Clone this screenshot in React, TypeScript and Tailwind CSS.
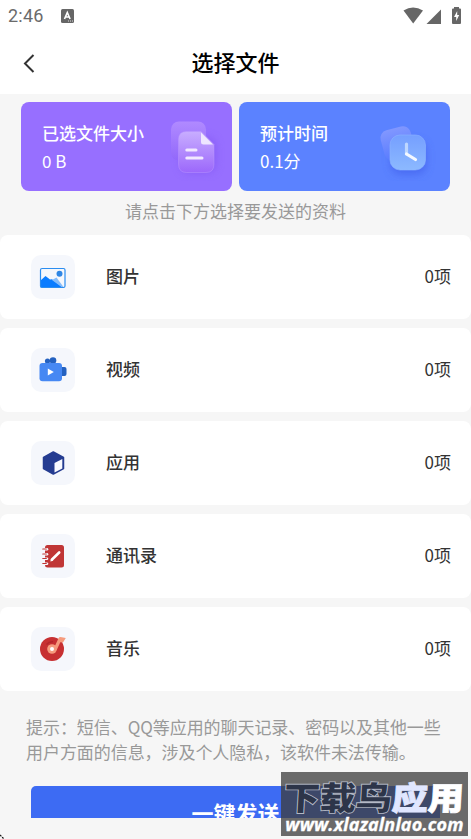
import React from "react";

const rows = [
  { label: "图片", icon: <PictureIcon /> },
  { label: "视频", icon: <VideoIcon /> },
  { label: "应用", icon: <AppIcon /> },
  { label: "通讯录", icon: <ContactsIcon /> },
  { label: "音乐", icon: <MusicIcon /> },
];

function PictureIcon() {
  return (
    <svg width="44" height="44" viewBox="0 0 44 44">
      <path d="M9.500 32V25.500L14.500 21L19 24.500L21 24.200L32 32.500H10Z" fill="#0a7cff" />
      <path d="M21 25L25.500 22.500L32.500 32H30.500Z" fill="#84bcfb" />
      <rect x="9.500" y="13.500" width="24.500" height="19" rx="1.500" fill="none" stroke="#2b8df0" strokeWidth="1.200" />
      <circle cx="28.500" cy="18.800" r="3" fill="#2f86e4" />
    </svg>
  );
}

function VideoIcon() {
  return (
    <svg width="44" height="44" viewBox="0 0 44 44">
      <circle cx="16.500" cy="13" r="2.600" fill="#2461c0" />
      <circle cx="22" cy="12.500" r="3.300" fill="#2461c0" />
      <rect x="27" y="19" width="8.500" height="9" rx="2" fill="#2461c0" />
      <rect x="8.500" y="15" width="22.500" height="18.200" rx="3" fill="#4688f3" />
      <path d="M16.800 20.500L22.800 24L16.800 27.500Z" fill="#fff" />
    </svg>
  );
}

function AppIcon() {
  return (
    <svg width="44" height="44" viewBox="0 0 44 44">
      <path d="M22.300 11L32.500 16.500V27.500L22.300 33L12.500 27.500V16.500Z" fill="#253c91" stroke="#253c91" strokeWidth="1.500" strokeLinejoin="round" />
      <path d="M23.500 22L31.300 18V27.500L23.500 31.500Z" fill="#f9faff" />
    </svg>
  );
}

function ContactsIcon() {
  return (
    <svg width="44" height="44" viewBox="0 0 44 44">
      <rect x="14" y="11" width="19" height="22.500" rx="2.500" fill="#c03636" />
      {[15, 20, 24.5, 29.5].map((y) => (
        <g key={y}>
          <rect x="12.500" y={y - 1} width="4.800" height="2.600" rx="1.300" fill="#f6f8fd" />
          <path d={`M11.800 ${y}H15.300`} stroke="#c03636" strokeWidth="1.200" strokeLinecap="round" />
        </g>
      ))}
      <path d="M21 25.500L28.200 18.500" stroke="#fff" strokeWidth="2.600" strokeLinecap="round" />
      <path d="M19.300 27.500L20 24.500L22.300 26.800Z" fill="#fff" />
    </svg>
  );
}

function MusicIcon() {
  return (
    <svg width="44" height="44" viewBox="0 0 44 44">
      <circle cx="21" cy="22" r="12" fill="#c73032" />
      <path d="M15.500 17.500Q18 14.500 22 14.800" fill="none" stroke="#b3272c" strokeWidth="1.500" />
      <path d="M23 21L27.500 11.200Q28 10 29.500 10L34.800 11L32 15.500L29.300 15.200L25.500 23.500Z" fill="#f69b7d" />
      <circle cx="21" cy="22" r="4.800" fill="#f69b7d" />
      <circle cx="21" cy="22" r="2" fill="#fff" />
    </svg>
  );
}

function FilesArt() {
  return (
    <svg width="60" height="66" viewBox="0 0 60 66">
      <defs>
        <linearGradient id="fileBack" x1="0" y1="0" x2="0" y2="1">
          <stop offset="0" stopColor="#b08aff" />
          <stop offset="1" stopColor="#9268fb" />
        </linearGradient>
        <linearGradient id="fileFront" x1="0" y1="0" x2="0" y2="1">
          <stop offset="0" stopColor="#c8adff" />
          <stop offset="1" stopColor="#9c68fb" />
        </linearGradient>
        <filter id="fileShadow" x="-50%" y="-50%" width="200%" height="200%">
          <feGaussianBlur stdDeviation="4" />
        </filter>
      </defs>
      <rect x="15" y="22" width="36" height="36" rx="9" fill="#7d50ef" opacity="0.500" filter="url(#fileShadow)" />
      <rect x="6" y="6.500" width="35" height="39" rx="8" fill="url(#fileBack)" />
      <path d="M21.500 16.500H36L49 29.500V49Q49 57.500 41 57.500H21.500Q13.500 57.500 13.500 49V24.500Q13.500 16.500 21.500 16.500Z" fill="url(#fileFront)" stroke="#b994ff" strokeWidth="0.500" />
      <path d="M36 17.500L48 29.500H38.500Q36 29.500 36 27Z" fill="#eee5ff" />
      <path d="M21.800 35H31M21.800 43H37" stroke="#f1e8ff" strokeWidth="3" strokeLinecap="round" />
    </svg>
  );
}

function ClockArt() {
  return (
    <svg width="64" height="66" viewBox="0 0 64 66">
      <defs>
        <linearGradient id="clockBack" x1="0" y1="0" x2="0" y2="1">
          <stop offset="0" stopColor="#8197ff" />
          <stop offset="1" stopColor="#587bff" />
        </linearGradient>
        <linearGradient id="clockFront" x1="0" y1="0" x2="0" y2="1">
          <stop offset="0" stopColor="#759fff" />
          <stop offset="1" stopColor="#8cb9ff" />
        </linearGradient>
        <filter id="clockShadow" x="-50%" y="-50%" width="200%" height="200%">
          <feGaussianBlur stdDeviation="4" />
        </filter>
      </defs>
      <rect x="17" y="26" width="35" height="33" rx="9" fill="#3b59e8" opacity="0.600" filter="url(#clockShadow)" />
      <rect x="8" y="13" width="31" height="31" rx="8" fill="url(#clockBack)" transform="rotate(-15 23 28)" />
      <rect x="16" y="20" width="35.500" height="35" rx="10" fill="url(#clockFront)" stroke="#8db5ff" strokeWidth="0.600" />
      <path d="M32.500 29V39" stroke="#bdd7ff" strokeWidth="3.200" strokeLinecap="round" />
      <path d="M32.500 39L41.500 44.500" stroke="#f4f9ff" strokeWidth="3.200" strokeLinecap="round" />
    </svg>
  );
}

function StatusBar() {
  return (
    <div className="flex h-8 items-center justify-between pr-2 pl-2">
      <div className="flex items-center gap-[17px]">
        <span className="w-9 font-[Roboto] text-[18px] leading-8 tracking-[0.2px] text-[#6b6b6b]">2:46</span>
        <svg width="13" height="14" viewBox="0 0 13 14">
          <rect width="13" height="14" rx="1.500" fill="#666" />
          <path d="M3.500 10L6.300 3.500L9.100 10M4.500 8H8.200" fill="none" stroke="#fff" strokeWidth="1.600" />
          <path d="M7 12H12" stroke="#ddd" strokeWidth="1" strokeDasharray="1 1" />
        </svg>
      </div>
      <svg width="60" height="20" viewBox="0 0 60 20">
        <path d="M0.500 4.500Q10 -1.500 20 4.500L10.200 17.500Z" fill="#666" />
        <path d="M38 3.500V18H23.500Z" fill="#666" />
        <path d="M51 2.500V1H56V2.500H57Q58 2.500 58 3.500V17Q58 18 57 18H50Q49 18 49 17V3.500Q49 2.500 50 2.500Z" fill="#666" />
        <path d="M54.200 5L51 11H53.200V15L56.200 9H54.200Z" fill="#fff" />
      </svg>
    </div>
  );
}

export default function App() {
  return (
    <div className="relative h-[839px] w-[471px] overflow-hidden bg-[#f6f6f6] font-['Noto_Sans_CJK_SC',sans-serif]">
      <header className="h-[94px] bg-white">
        <StatusBar />
        <div className="grid h-[60px] grid-cols-[60px_1fr_60px] items-center">
          <svg className="mt-px ml-[23px]" width="12" height="20" viewBox="0 0 12 20">
            <path d="M10.500 2L2 10.500L10.500 19" fill="none" stroke="#333" strokeWidth="2" />
          </svg>
          <h1 className="-mt-[2px] text-center text-[22px] font-medium text-black">选择文件</h1>
        </div>
      </header>

      {/* Summary cards */}
      <section className="mt-2 grid grid-cols-2 gap-[7px] px-[21px] text-[17px] text-white">
        <div className="flex h-[89px] justify-between rounded-lg bg-[#976fff] pt-[17px] pl-[21px]">
          <div className="leading-7">
            <p className="font-medium">已选文件大小</p>
            <p>0 B</p>
          </div>
          <div className="-mt-[4px] mr-[7px]">
            <FilesArt />
          </div>
        </div>
        <div className="flex h-[89px] justify-between rounded-lg bg-[#5b82ff] pt-[17px] pl-[21px]">
          <div className="leading-7">
            <p className="font-medium">预计时间</p>
            <p>0.1分</p>
          </div>
          <div className="-mt-[4px] mr-[12px]">
            <ClockArt />
          </div>
        </div>
      </section>

      <p className="h-11 text-center text-[17px] leading-[39px] text-[#999]">请点击下方选择要发送的资料</p>

      {/* File categories */}
      <ul className="flex flex-col gap-[9px]">
        {rows.map((row) => (
          <li key={row.label} className="flex h-[84px] items-center rounded-lg bg-white pr-5 pl-[31px] text-[17px] text-[#333]">
            <span className="size-11 rounded-[10px] bg-[#f5f7fc]">{row.icon}</span>
            <span className="-mt-[2px] ml-[31px] flex-1 font-medium">{row.label}</span>
            <span className="-mt-[2px]">0项</span>
          </li>
        ))}
      </ul>

      <p className="mt-[23px] ml-[26px] w-[420px] text-[17px] leading-[25px] tracking-[-0.060px] text-[#999]">
        提示：短信、QQ等应用的聊天记录、密码以及其他一些用户方面的信息，涉及个人隐私，该软件未法传输。
      </p>

      <div className="mx-[31px] mt-[22px] h-8 overflow-hidden rounded-t-[5px] bg-[#3d6bf3]">
        <button className="block h-[52px] w-full text-center text-[22px] font-bold text-white">一键发送</button>
      </div>

      <svg className="absolute bottom-0 left-0" width="5" height="5" viewBox="0 0 5 5">
        <path d="M0 1L4 5" stroke="#111" strokeWidth="1.200" strokeDasharray="2 1" />
      </svg>

      {/* Site badge over the button */}
      <div className="absolute top-[772px] left-[281px] flex h-16 w-[187px] flex-col items-center bg-[#3e3e3e]/76 whitespace-nowrap">
        <p className="mt-[6px] h-[37px] -skew-x-3 scale-y-90 text-[36px] leading-[37px] font-black text-[#2d3549] [-webkit-text-stroke:2px_#b4b9c6] [paint-order:stroke_fill]">
          下载鸟
          <span className="text-[#e0e6ff] [-webkit-text-stroke:1px_#e0e6ff]">应</span>
          <span className="text-white [-webkit-text-stroke:1px_#f4f5ff]">用</span>
        </p>
        <p className="font-['Open_Sans',sans-serif] text-[18px] leading-[18px] font-bold tracking-[0.150px] text-white italic [-webkit-text-stroke:0.300px_white]">
          www.xlazalnlao.com
        </p>
      </div>
    </div>
  );
}
